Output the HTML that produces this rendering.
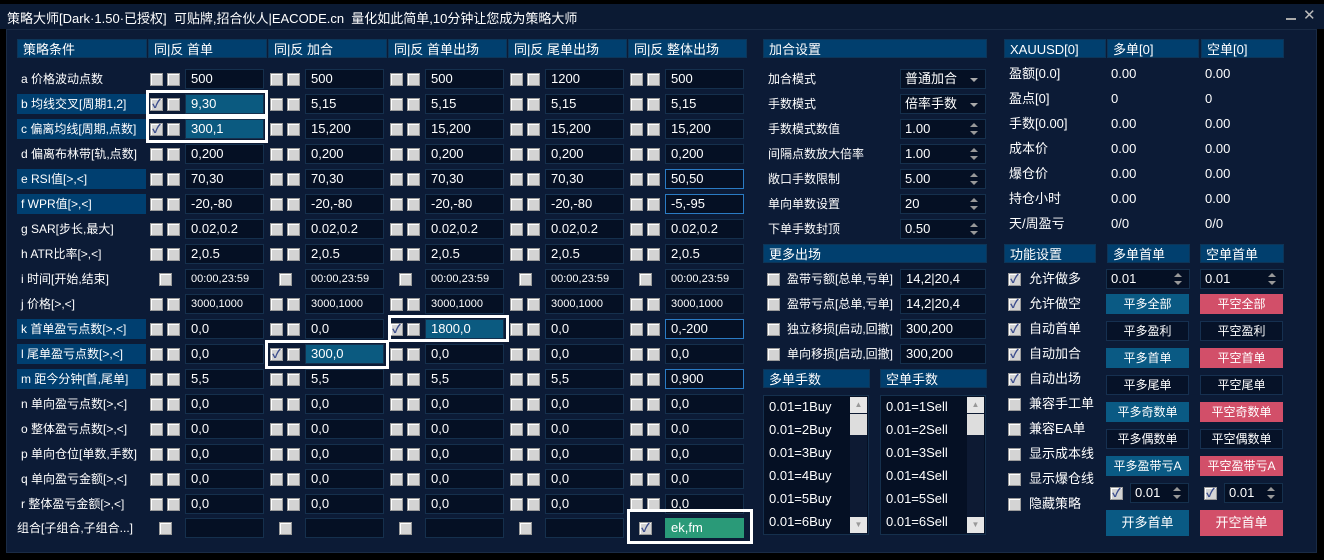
<!DOCTYPE html>
<html><head><meta charset="utf-8"><style>
*{margin:0;padding:0;box-sizing:border-box}
body{width:1324px;height:560px;background:#000;position:relative;overflow:hidden;font-family:"Liberation Sans","Noto Sans CJK SC",sans-serif;font-size:13px;color:#fff}
#tb{position:absolute;left:0;top:4px;width:1324px;height:25px;background:#0b1a33}
#tb span{position:absolute;left:7px;top:4px;font-size:13px}
#pn{position:absolute;left:6px;top:29px;width:1311px;height:524px;background:#0c1b36;border:1px solid #1a2b45}
.a{position:absolute}
.h{position:absolute;height:19px;background:#013f6e;line-height:19px;padding-left:5px;font-size:13px;border:1px solid #0d3558}
.r{position:absolute;left:0;width:760px;height:20px}
.lb{position:absolute;left:21px;top:0;line-height:20px;white-space:nowrap;font-size:12px}
.lb.s{left:17px;width:129px;padding-left:4px;background:#003f70}
.cb{position:absolute;top:4px;width:13px;height:13px;background:#d4d4d4;border:1px solid #9a9a9a;box-shadow:inset 1px 1px 0 #fff;font-style:normal;font-size:12px;line-height:11px;color:#3b4c8c;text-align:center;font-weight:bold}
.in{position:absolute;top:0;width:79px;height:20px;background:#051024;border:1px solid #15304d;line-height:18px;padding-left:5px;white-space:nowrap}
.sm{font-size:11px}
.hl{background:#0b5a80}
.fc{border-color:#2a7bc4}
.bx{position:absolute;border:3px solid #fff}
.v{position:absolute;line-height:20px;white-space:nowrap}
.t{font-size:12px}
.dd{position:absolute;width:86px;height:20px;background:#051024;border:1px solid #15304d;line-height:18px;padding-left:4px}
.dd:after{content:"";position:absolute;right:7px;top:8px;border:4px solid transparent;border-top:4px solid #aaa;border-bottom:0}
.sp:after{content:"";position:absolute;right:7px;top:3px;border:4px solid transparent;border-bottom:4px solid #999;border-top:0}
.sp:before{content:"";position:absolute;right:7px;bottom:3px;border:4px solid transparent;border-top:4px solid #999;border-bottom:0}
.bt{position:absolute;width:83px;height:20px;line-height:20px;text-align:center;font-size:12px}
.bb{background:#0a5a84}.br{background:#d24f69}.bd{background:#061228;border:1px solid #163050;line-height:18px}
.lst{position:absolute;top:395px;width:106px;height:140px;background:#051024;border:1px solid #15304d}
.lst div{position:absolute;left:5px;font-size:13px}
.sb{position:absolute;right:1px;top:1px;width:17px;height:137px;background:#0d1a33}
.sb i{position:absolute;left:0;width:17px;background:#e6e6e6}
</style></head><body>
<div id="tb"><span>策略大师[Dark·1.50·已授权]&nbsp; 可贴牌,招合伙人|EACODE.cn&nbsp; 量化如此简单,10分钟让您成为策略大师</span>
<div class="a" style="left:1286px;top:14px;width:10px;height:2px;background:#aaa"></div>
<div class="a" style="left:1303px;top:2px;font-size:15px;color:#bbb">✕</div></div>
<div id="pn"></div>

<div class="h" style="left:17px;top:39px;width:130px">策略条件</div>
<div class="h" style="left:148px;top:39px;width:119px">同|反 首单</div>
<div class="h" style="left:268px;top:39px;width:119px">同|反 加合</div>
<div class="h" style="left:388px;top:39px;width:119px">同|反 首单出场</div>
<div class="h" style="left:508px;top:39px;width:119px">同|反 尾单出场</div>
<div class="h" style="left:628px;top:39px;width:119px">同|反 整体出场</div>

<div class="r" style="top:69px"><div class="lb">a 价格波动点数</div>
<i class="cb" style="left:150px"></i><i class="cb" style="left:167px"></i><div class="in" style="left:185px">500</div>
<i class="cb" style="left:270px"></i><i class="cb" style="left:287px"></i><div class="in" style="left:305px">500</div>
<i class="cb" style="left:390px"></i><i class="cb" style="left:407px"></i><div class="in" style="left:425px">500</div>
<i class="cb" style="left:510px"></i><i class="cb" style="left:527px"></i><div class="in" style="left:545px">1200</div>
<i class="cb" style="left:630px"></i><i class="cb" style="left:647px"></i><div class="in" style="left:665px">500</div></div>

<div class="r" style="top:94px"><div class="lb s">b 均线交叉[周期1,2]</div>
<i class="cb" style="left:150px">✓</i><i class="cb" style="left:167px"></i><div class="in hl" style="left:185px">9,30</div>
<i class="cb" style="left:270px"></i><i class="cb" style="left:287px"></i><div class="in" style="left:305px">5,15</div>
<i class="cb" style="left:390px"></i><i class="cb" style="left:407px"></i><div class="in" style="left:425px">5,15</div>
<i class="cb" style="left:510px"></i><i class="cb" style="left:527px"></i><div class="in" style="left:545px">5,15</div>
<i class="cb" style="left:630px"></i><i class="cb" style="left:647px"></i><div class="in" style="left:665px">5,15</div></div>

<div class="r" style="top:119px"><div class="lb s">c 偏离均线[周期,点数]</div>
<i class="cb" style="left:150px">✓</i><i class="cb" style="left:167px"></i><div class="in hl" style="left:185px">300,1</div>
<i class="cb" style="left:270px"></i><i class="cb" style="left:287px"></i><div class="in" style="left:305px">15,200</div>
<i class="cb" style="left:390px"></i><i class="cb" style="left:407px"></i><div class="in" style="left:425px">15,200</div>
<i class="cb" style="left:510px"></i><i class="cb" style="left:527px"></i><div class="in" style="left:545px">15,200</div>
<i class="cb" style="left:630px"></i><i class="cb" style="left:647px"></i><div class="in" style="left:665px">15,200</div></div>

<div class="r" style="top:144px"><div class="lb">d 偏离布林带[轨,点数]</div>
<i class="cb" style="left:150px"></i><i class="cb" style="left:167px"></i><div class="in" style="left:185px">0,200</div>
<i class="cb" style="left:270px"></i><i class="cb" style="left:287px"></i><div class="in" style="left:305px">0,200</div>
<i class="cb" style="left:390px"></i><i class="cb" style="left:407px"></i><div class="in" style="left:425px">0,200</div>
<i class="cb" style="left:510px"></i><i class="cb" style="left:527px"></i><div class="in" style="left:545px">0,200</div>
<i class="cb" style="left:630px"></i><i class="cb" style="left:647px"></i><div class="in" style="left:665px">0,200</div></div>

<div class="r" style="top:169px"><div class="lb s">e RSI值[&gt;,&lt;]</div>
<i class="cb" style="left:150px"></i><i class="cb" style="left:167px"></i><div class="in" style="left:185px">70,30</div>
<i class="cb" style="left:270px"></i><i class="cb" style="left:287px"></i><div class="in" style="left:305px">70,30</div>
<i class="cb" style="left:390px"></i><i class="cb" style="left:407px"></i><div class="in" style="left:425px">70,30</div>
<i class="cb" style="left:510px"></i><i class="cb" style="left:527px"></i><div class="in" style="left:545px">70,30</div>
<i class="cb" style="left:630px"></i><i class="cb" style="left:647px"></i><div class="in fc" style="left:665px">50,50</div></div>

<div class="r" style="top:194px"><div class="lb s">f WPR值[&gt;,&lt;]</div>
<i class="cb" style="left:150px"></i><i class="cb" style="left:167px"></i><div class="in" style="left:185px">-20,-80</div>
<i class="cb" style="left:270px"></i><i class="cb" style="left:287px"></i><div class="in" style="left:305px">-20,-80</div>
<i class="cb" style="left:390px"></i><i class="cb" style="left:407px"></i><div class="in" style="left:425px">-20,-80</div>
<i class="cb" style="left:510px"></i><i class="cb" style="left:527px"></i><div class="in" style="left:545px">-20,-80</div>
<i class="cb" style="left:630px"></i><i class="cb" style="left:647px"></i><div class="in fc" style="left:665px">-5,-95</div></div>

<div class="r" style="top:219px"><div class="lb">g SAR[步长,最大]</div>
<i class="cb" style="left:150px"></i><i class="cb" style="left:167px"></i><div class="in" style="left:185px">0.02,0.2</div>
<i class="cb" style="left:270px"></i><i class="cb" style="left:287px"></i><div class="in" style="left:305px">0.02,0.2</div>
<i class="cb" style="left:390px"></i><i class="cb" style="left:407px"></i><div class="in" style="left:425px">0.02,0.2</div>
<i class="cb" style="left:510px"></i><i class="cb" style="left:527px"></i><div class="in" style="left:545px">0.02,0.2</div>
<i class="cb" style="left:630px"></i><i class="cb" style="left:647px"></i><div class="in" style="left:665px">0.02,0.2</div></div>

<div class="r" style="top:244px"><div class="lb">h ATR比率[&gt;,&lt;]</div>
<i class="cb" style="left:150px"></i><i class="cb" style="left:167px"></i><div class="in" style="left:185px">2,0.5</div>
<i class="cb" style="left:270px"></i><i class="cb" style="left:287px"></i><div class="in" style="left:305px">2,0.5</div>
<i class="cb" style="left:390px"></i><i class="cb" style="left:407px"></i><div class="in" style="left:425px">2,0.5</div>
<i class="cb" style="left:510px"></i><i class="cb" style="left:527px"></i><div class="in" style="left:545px">2,0.5</div>
<i class="cb" style="left:630px"></i><i class="cb" style="left:647px"></i><div class="in" style="left:665px">2,0.5</div></div>

<div class="r" style="top:269px"><div class="lb">i 时间[开始,结束]</div>
<i class="cb" style="left:159px"></i><div class="in sm" style="left:185px">00:00,23:59</div>
<i class="cb" style="left:279px"></i><div class="in sm" style="left:305px">00:00,23:59</div>
<i class="cb" style="left:399px"></i><div class="in sm" style="left:425px">00:00,23:59</div>
<i class="cb" style="left:519px"></i><div class="in sm" style="left:545px">00:00,23:59</div>
<i class="cb" style="left:639px"></i><div class="in sm" style="left:665px">00:00,23:59</div></div>

<div class="r" style="top:294px"><div class="lb">j 价格[&gt;,&lt;]</div>
<i class="cb" style="left:150px"></i><i class="cb" style="left:167px"></i><div class="in sm" style="left:185px">3000,1000</div>
<i class="cb" style="left:270px"></i><i class="cb" style="left:287px"></i><div class="in sm" style="left:305px">3000,1000</div>
<i class="cb" style="left:390px"></i><i class="cb" style="left:407px"></i><div class="in sm" style="left:425px">3000,1000</div>
<i class="cb" style="left:510px"></i><i class="cb" style="left:527px"></i><div class="in sm" style="left:545px">3000,1000</div>
<i class="cb" style="left:630px"></i><i class="cb" style="left:647px"></i><div class="in sm" style="left:665px">3000,1000</div></div>

<div class="r" style="top:319px"><div class="lb s">k 首单盈亏点数[&gt;,&lt;]</div>
<i class="cb" style="left:150px"></i><i class="cb" style="left:167px"></i><div class="in" style="left:185px">0,0</div>
<i class="cb" style="left:270px"></i><i class="cb" style="left:287px"></i><div class="in" style="left:305px">0,0</div>
<i class="cb" style="left:390px">✓</i><i class="cb" style="left:407px"></i><div class="in hl" style="left:425px">1800,0</div>
<i class="cb" style="left:510px"></i><i class="cb" style="left:527px"></i><div class="in" style="left:545px">0,0</div>
<i class="cb" style="left:630px"></i><i class="cb" style="left:647px"></i><div class="in fc" style="left:665px">0,-200</div></div>

<div class="r" style="top:344px"><div class="lb s">l 尾单盈亏点数[&gt;,&lt;]</div>
<i class="cb" style="left:150px"></i><i class="cb" style="left:167px"></i><div class="in" style="left:185px">0,0</div>
<i class="cb" style="left:270px">✓</i><i class="cb" style="left:287px"></i><div class="in hl" style="left:305px">300,0</div>
<i class="cb" style="left:390px"></i><i class="cb" style="left:407px"></i><div class="in" style="left:425px">0,0</div>
<i class="cb" style="left:510px"></i><i class="cb" style="left:527px"></i><div class="in" style="left:545px">0,0</div>
<i class="cb" style="left:630px"></i><i class="cb" style="left:647px"></i><div class="in" style="left:665px">0,0</div></div>

<div class="r" style="top:369px"><div class="lb s">m 距今分钟[首,尾单]</div>
<i class="cb" style="left:150px"></i><i class="cb" style="left:167px"></i><div class="in" style="left:185px">5,5</div>
<i class="cb" style="left:270px"></i><i class="cb" style="left:287px"></i><div class="in" style="left:305px">5,5</div>
<i class="cb" style="left:390px"></i><i class="cb" style="left:407px"></i><div class="in" style="left:425px">5,5</div>
<i class="cb" style="left:510px"></i><i class="cb" style="left:527px"></i><div class="in" style="left:545px">5,5</div>
<i class="cb" style="left:630px"></i><i class="cb" style="left:647px"></i><div class="in fc" style="left:665px">0,900</div></div>

<div class="r" style="top:394px"><div class="lb">n 单向盈亏点数[&gt;,&lt;]</div>
<i class="cb" style="left:150px"></i><i class="cb" style="left:167px"></i><div class="in" style="left:185px">0,0</div>
<i class="cb" style="left:270px"></i><i class="cb" style="left:287px"></i><div class="in" style="left:305px">0,0</div>
<i class="cb" style="left:390px"></i><i class="cb" style="left:407px"></i><div class="in" style="left:425px">0,0</div>
<i class="cb" style="left:510px"></i><i class="cb" style="left:527px"></i><div class="in" style="left:545px">0,0</div>
<i class="cb" style="left:630px"></i><i class="cb" style="left:647px"></i><div class="in" style="left:665px">0,0</div></div>

<div class="r" style="top:419px"><div class="lb">o 整体盈亏点数[&gt;,&lt;]</div>
<i class="cb" style="left:150px"></i><i class="cb" style="left:167px"></i><div class="in" style="left:185px">0,0</div>
<i class="cb" style="left:270px"></i><i class="cb" style="left:287px"></i><div class="in" style="left:305px">0,0</div>
<i class="cb" style="left:390px"></i><i class="cb" style="left:407px"></i><div class="in" style="left:425px">0,0</div>
<i class="cb" style="left:510px"></i><i class="cb" style="left:527px"></i><div class="in" style="left:545px">0,0</div>
<i class="cb" style="left:630px"></i><i class="cb" style="left:647px"></i><div class="in" style="left:665px">0,0</div></div>

<div class="r" style="top:444px"><div class="lb">p 单向仓位[单数,手数]</div>
<i class="cb" style="left:150px"></i><i class="cb" style="left:167px"></i><div class="in" style="left:185px">0,0</div>
<i class="cb" style="left:270px"></i><i class="cb" style="left:287px"></i><div class="in" style="left:305px">0,0</div>
<i class="cb" style="left:390px"></i><i class="cb" style="left:407px"></i><div class="in" style="left:425px">0,0</div>
<i class="cb" style="left:510px"></i><i class="cb" style="left:527px"></i><div class="in" style="left:545px">0,0</div>
<i class="cb" style="left:630px"></i><i class="cb" style="left:647px"></i><div class="in" style="left:665px">0,0</div></div>

<div class="r" style="top:469px"><div class="lb">q 单向盈亏金额[&gt;,&lt;]</div>
<i class="cb" style="left:150px"></i><i class="cb" style="left:167px"></i><div class="in" style="left:185px">0,0</div>
<i class="cb" style="left:270px"></i><i class="cb" style="left:287px"></i><div class="in" style="left:305px">0,0</div>
<i class="cb" style="left:390px"></i><i class="cb" style="left:407px"></i><div class="in" style="left:425px">0,0</div>
<i class="cb" style="left:510px"></i><i class="cb" style="left:527px"></i><div class="in" style="left:545px">0,0</div>
<i class="cb" style="left:630px"></i><i class="cb" style="left:647px"></i><div class="in" style="left:665px">0,0</div></div>

<div class="r" style="top:494px"><div class="lb">r 整体盈亏金额[&gt;,&lt;]</div>
<i class="cb" style="left:150px"></i><i class="cb" style="left:167px"></i><div class="in" style="left:185px">0,0</div>
<i class="cb" style="left:270px"></i><i class="cb" style="left:287px"></i><div class="in" style="left:305px">0,0</div>
<i class="cb" style="left:390px"></i><i class="cb" style="left:407px"></i><div class="in" style="left:425px">0,0</div>
<i class="cb" style="left:510px"></i><i class="cb" style="left:527px"></i><div class="in" style="left:545px">0,0</div>
<i class="cb" style="left:630px"></i><i class="cb" style="left:647px"></i><div class="in" style="left:665px">0,0</div></div>

<div class="r" style="top:518px"><div class="lb" style="left:17px">组合[子组合,子组合...]</div>
<i class="cb" style="left:159px"></i><div class="in" style="left:185px"></div>
<i class="cb" style="left:279px"></i><div class="in" style="left:305px"></div>
<i class="cb" style="left:399px"></i><div class="in" style="left:425px"></div>
<i class="cb" style="left:519px"></i><div class="in" style="left:545px"></div>
<i class="cb" style="left:639px">✓</i><div class="in" style="left:665px;background:#2a9a78;border-color:#2a9a78">ek,fm</div></div>

<div class="bx" style="left:146px;top:90px;width:122px;height:27px"></div>
<div class="bx" style="left:146px;top:116px;width:122px;height:27px"></div>
<div class="bx" style="left:388px;top:315px;width:121px;height:27px"></div>
<div class="bx" style="left:265px;top:340px;width:124px;height:29px"></div>
<div class="bx" style="left:627px;top:509px;width:126px;height:35px"></div>

<!-- 加合设置 -->
<div class="h" style="left:763px;top:39px;width:224px">加合设置</div>
<div class="v t" style="left:768px;top:69px">加合模式</div><div class="dd" style="left:900px;top:69px">普通加合</div>
<div class="v t" style="left:768px;top:94px">手数模式</div><div class="dd" style="left:900px;top:94px">倍率手数</div>
<div class="v t" style="left:768px;top:119px">手数模式数值</div><div class="dd sp" style="left:900px;top:119px">1.00</div>
<div class="v t" style="left:768px;top:144px">间隔点数放大倍率</div><div class="dd sp" style="left:900px;top:144px">1.00</div>
<div class="v t" style="left:768px;top:169px">敞口手数限制</div><div class="dd sp" style="left:900px;top:169px">5.00</div>
<div class="v t" style="left:768px;top:194px">单向单数设置</div><div class="dd sp" style="left:900px;top:194px">20</div>
<div class="v t" style="left:768px;top:219px">下单手数封顶</div><div class="dd sp" style="left:900px;top:219px">0.50</div>

<div class="h" style="left:763px;top:244px;width:224px">更多出场</div>
<i class="cb" style="left:767px;top:273px"></i><div class="v t" style="left:787px;top:269px">盈带亏额[总单,亏单]</div><div class="in" style="left:900px;top:269px;width:86px">14,2|20,4</div>
<i class="cb" style="left:767px;top:298px"></i><div class="v t" style="left:787px;top:294px">盈带亏点[总单,亏单]</div><div class="in" style="left:900px;top:294px;width:86px">14,2|20,4</div>
<i class="cb" style="left:767px;top:323px"></i><div class="v t" style="left:787px;top:319px">独立移损[启动,回撤]</div><div class="in" style="left:900px;top:319px;width:86px">300,200</div>
<i class="cb" style="left:767px;top:348px"></i><div class="v t" style="left:787px;top:344px">单向移损[启动,回撤]</div><div class="in" style="left:900px;top:344px;width:86px">300,200</div>

<div class="h" style="left:763px;top:369px;width:107px">多单手数</div>
<div class="h" style="left:880px;top:369px;width:107px">空单手数</div>
<div class="lst" style="left:763px">
<div style="top:3px">0.01=1Buy</div><div style="top:26px">0.01=2Buy</div><div style="top:49px">0.01=3Buy</div><div style="top:72px">0.01=4Buy</div><div style="top:95px">0.01=5Buy</div><div style="top:118px">0.01=6Buy</div>
<div class="sb" style="left:auto"><i style="top:0;height:16px;text-align:center;font-size:8px;color:#999;line-height:16px">▲</i><i style="top:17px;height:21px;background:#ddd"></i><i style="top:120px;height:16px;text-align:center;font-size:8px;color:#999;line-height:16px">▼</i></div></div>
<div class="lst" style="left:880px">
<div style="top:3px">0.01=1Sell</div><div style="top:26px">0.01=2Sell</div><div style="top:49px">0.01=3Sell</div><div style="top:72px">0.01=4Sell</div><div style="top:95px">0.01=5Sell</div><div style="top:118px">0.01=6Sell</div>
<div class="sb" style="left:auto"><i style="top:0;height:16px;text-align:center;font-size:8px;color:#999;line-height:16px">▲</i><i style="top:17px;height:21px;background:#ddd"></i><i style="top:120px;height:16px;text-align:center;font-size:8px;color:#999;line-height:16px">▼</i></div></div>

<!-- right -->
<div class="h" style="left:1004px;top:39px;width:102px">XAUUSD[0]</div>
<div class="h" style="left:1107px;top:39px;width:92px">多单[0]</div>
<div class="h" style="left:1201px;top:39px;width:83px">空单[0]</div>
<div class="v" style="left:1009px;top:64px">盈额[0.0]</div><div class="v" style="left:1111px;top:64px">0.00</div><div class="v" style="left:1205px;top:64px">0.00</div>
<div class="v" style="left:1009px;top:89px">盈点[0]</div><div class="v" style="left:1111px;top:89px">0</div><div class="v" style="left:1205px;top:89px">0</div>
<div class="v" style="left:1009px;top:114px">手数[0.00]</div><div class="v" style="left:1111px;top:114px">0.00</div><div class="v" style="left:1205px;top:114px">0.00</div>
<div class="v" style="left:1009px;top:139px">成本价</div><div class="v" style="left:1111px;top:139px">0.00</div><div class="v" style="left:1205px;top:139px">0.00</div>
<div class="v" style="left:1009px;top:164px">爆仓价</div><div class="v" style="left:1111px;top:164px">0.00</div><div class="v" style="left:1205px;top:164px">0.00</div>
<div class="v" style="left:1009px;top:189px">持仓小时</div><div class="v" style="left:1111px;top:189px">0.00</div><div class="v" style="left:1205px;top:189px">0.00</div>
<div class="v" style="left:1009px;top:214px">天/周盈亏</div><div class="v" style="left:1111px;top:214px">0/0</div><div class="v" style="left:1205px;top:214px">0/0</div>

<div class="h" style="left:1004px;top:244px;width:92px">功能设置</div>
<div class="h" style="left:1107px;top:244px;width:83px">多单首单</div>
<div class="h" style="left:1200px;top:244px;width:84px">空单首单</div>
<i class="cb" style="left:1008px;top:273px">✓</i><div class="v" style="left:1029px;top:269px">允许做多</div>
<i class="cb" style="left:1008px;top:298px">✓</i><div class="v" style="left:1029px;top:294px">允许做空</div>
<i class="cb" style="left:1008px;top:323px">✓</i><div class="v" style="left:1029px;top:319px">自动首单</div>
<i class="cb" style="left:1008px;top:348px">✓</i><div class="v" style="left:1029px;top:344px">自动加合</div>
<i class="cb" style="left:1008px;top:373px">✓</i><div class="v" style="left:1029px;top:369px">自动出场</div>
<i class="cb" style="left:1008px;top:398px"></i><div class="v" style="left:1029px;top:394px">兼容手工单</div>
<i class="cb" style="left:1008px;top:423px"></i><div class="v" style="left:1029px;top:419px">兼容EA单</div>
<i class="cb" style="left:1008px;top:448px"></i><div class="v" style="left:1029px;top:444px">显示成本线</div>
<i class="cb" style="left:1008px;top:473px"></i><div class="v" style="left:1029px;top:469px">显示爆仓线</div>
<i class="cb" style="left:1008px;top:498px"></i><div class="v" style="left:1029px;top:494px">隐藏策略</div>

<div class="dd sp" style="left:1106px;top:269px;width:84px">0.01</div>
<div class="dd sp" style="left:1200px;top:269px;width:84px">0.01</div>
<div class="bt bb" style="left:1106px;top:294px">平多全部</div><div class="bt br" style="left:1200px;top:294px">平空全部</div>
<div class="bt bd" style="left:1106px;top:321px">平多盈利</div><div class="bt bd" style="left:1200px;top:321px">平空盈利</div>
<div class="bt bb" style="left:1106px;top:348px">平多首单</div><div class="bt br" style="left:1200px;top:348px">平空首单</div>
<div class="bt bd" style="left:1106px;top:375px">平多尾单</div><div class="bt bd" style="left:1200px;top:375px">平空尾单</div>
<div class="bt bb" style="left:1106px;top:402px">平多奇数单</div><div class="bt br" style="left:1200px;top:402px">平空奇数单</div>
<div class="bt bd" style="left:1106px;top:429px">平多偶数单</div><div class="bt bd" style="left:1200px;top:429px">平空偶数单</div>
<div class="bt bb" style="left:1106px;top:456px">平多盈带亏A</div><div class="bt br" style="left:1200px;top:456px">平空盈带亏A</div>
<i class="cb" style="left:1110px;top:487px">✓</i><div class="dd sp" style="left:1130px;top:483px;width:59px">0.01</div>
<i class="cb" style="left:1204px;top:487px">✓</i><div class="dd sp" style="left:1224px;top:483px;width:59px">0.01</div>
<div class="bt bb" style="left:1106px;top:510px;height:26px;line-height:26px;font-size:13px">开多首单</div>
<div class="bt br" style="left:1200px;top:510px;height:26px;line-height:26px;font-size:13px">开空首单</div>
</body></html>
